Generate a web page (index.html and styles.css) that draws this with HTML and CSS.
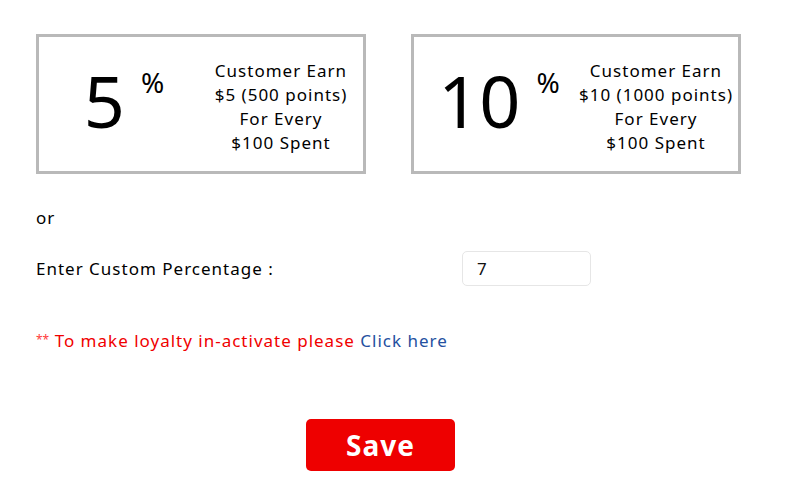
FILE: index.html
```html
<!DOCTYPE html>
<html lang="en">
<head>
  <meta charset="UTF-8">
  <title>Loyalty Settings</title>
  <link rel="stylesheet" href="styles.css">
</head>
<body>

<div class="container">
  <div class="plans">
    <div class="plan">
      <div class="rate">5<span class="pct">%</span></div>
      <div class="desc">Customer Earn<br>$5 (500 points)<br>For Every<br>$100 Spent</div>
    </div>
    <div class="plan">
      <div class="rate">10<span class="pct">%</span></div>
      <div class="desc">Customer Earn<br>$10 (1000 points)<br>For Every<br>$100 Spent</div>
    </div>
  </div>

  <div class="or">or</div>

  <div class="custom-row">
    <label class="custom-label" for="customPct">Enter Custom Percentage :</label>
    <input class="custom-input" type="text" id="customPct" value="7" />
  </div>

  <div class="note">
    <span class="stars">**</span> To make loyalty in-activate please <a href="#" class="link">Click here</a>
  </div>

  <div class="actions">
    <button class="save">Save</button>
  </div>
</div>

</body>
</html>
```

FILE: styles.css
```css
body {
  font-family: "Noto Sans", sans-serif;
  margin: 0;
  background: #fff;
  color: #000;
  letter-spacing: 1px;
}

.container {
  width: 705px;
  padding: 34px 0 0 36px;
}

.plans {
  display: flex;
  gap: 45px;
}

.plan {
  flex: none;
  width: 324px;
  height: 134px;
  border: 3px solid #b9b9b9;
  display: flex;
  align-items: center;
}

.rate {
  width: 170px;
  text-align: center;
  font-size: 72px;
  line-height: 1;
  letter-spacing: 0;
  padding-bottom: 8px;
}

.pct {
  font-size: 28px;
  vertical-align: top;
  margin-left: 16px;
  position: relative;
  top: 4px;
}

.desc {
  flex: none;
  width: 156px;
  margin-left: -6px;
  text-align: center;
  font-size: 17px;
  line-height: 24px;
  padding-top: 5px;
  white-space: nowrap;
}

.or {
  font-size: 17px;
  margin-top: 32px;
  line-height: 24px;
}

.custom-row {
  display: flex;
  align-items: center;
  margin-top: 21px;
}

.custom-label {
  width: 426px;
  font-size: 17px;
}

.custom-input {
  box-sizing: border-box;
  height: 35px;
  width: 129px;
  padding: 0 14px;
  font-family: inherit;
  font-size: 17px;
  border: 1px solid #e6e6e6;
  border-radius: 5px;
  color: #111;
}

.note {
  margin-top: 42px;
  font-size: 17px;
  line-height: 24px;
  color: #f00000;
}

.stars {
  font-size: 12px;
  letter-spacing: 0;
  vertical-align: 3px;
  color: #ff3b3b;
}

.link {
  color: #2450a0;
  text-decoration: none;
}

.actions {
  display: flex;
  margin-top: 66px;
  padding-left: 270px;
}

.save {
  width: 149px;
  height: 52px;
  background-color: #ee0000;
  color: #fff;
  border: none;
  border-radius: 5px;
  font-family: inherit;
  font-size: 28px;
  font-weight: bold;
  letter-spacing: 1px;
  cursor: pointer;
}
```
